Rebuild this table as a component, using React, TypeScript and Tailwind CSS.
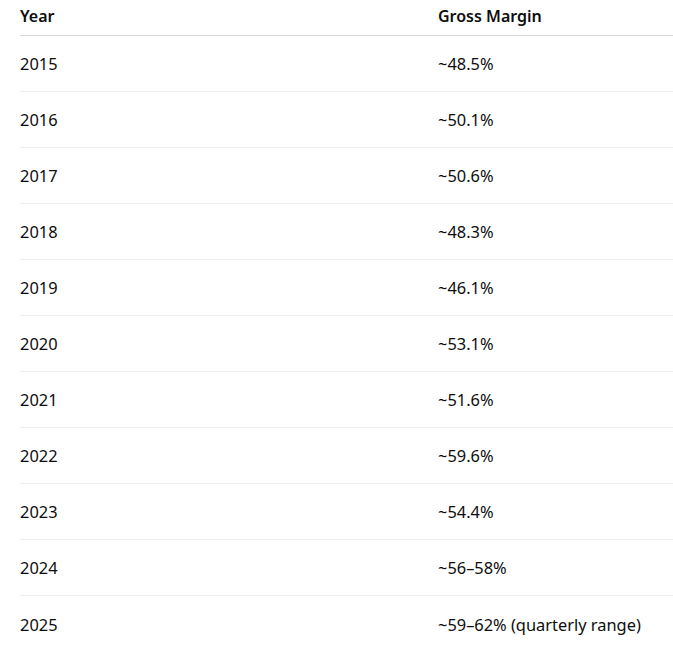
import React from 'react';

const rows: [string, string][] = [
  ['2015', '~48.5%'],
  ['2016', '~50.1%'],
  ['2017', '~50.6%'],
  ['2018', '~48.3%'],
  ['2019', '~46.1%'],
  ['2020', '~53.1%'],
  ['2021', '~51.6%'],
  ['2022', '~59.6%'],
  ['2023', '~54.4%'],
  ['2024', '~56–58%'],
  ['2025', '~59–62% (quarterly range)'],
];

const App: React.FC = () => {
  return (
    <div className="min-h-[650px] bg-white pl-[20px] text-[16px] text-[#0d0d0d] font-['Noto_Sans',sans-serif]">
      {/* Cabecera */}
      <div className="grid grid-cols-[418px_1fr] h-[36px] items-center border-b border-[#d6d6d6] font-semibold">
        <div className="-mt-[3px]">Year</div>
        <div className="-mt-[3px]">Gross Margin</div>
      </div>

      {/* Filas */}
      {rows.map(([year, margin], i) => (
        <div
          key={year}
          className={`grid grid-cols-[418px_1fr] h-[56px] items-center text-[16.4px] ${
            i < rows.length - 1 ? 'border-b border-[#efefef]' : ''
          }`}
        >
          <div className="mt-[2px]">{year}</div>
          <div className="mt-[2px]">{margin}</div>
        </div>
      ))}
    </div>
  );
};

export default App;
